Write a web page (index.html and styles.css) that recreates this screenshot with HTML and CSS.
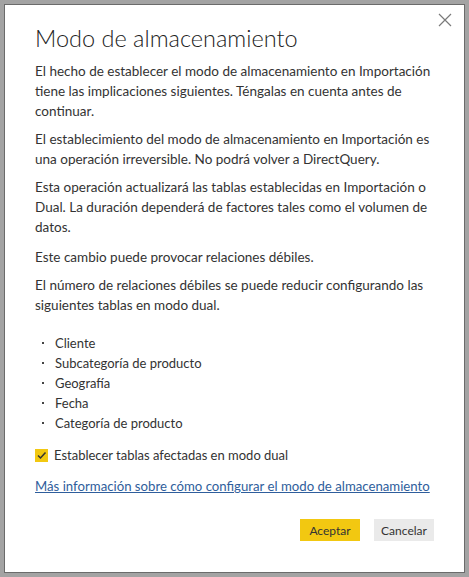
FILE: index.html
```html
<!DOCTYPE html>
<html lang="es">
<head>
<meta charset="utf-8">
<link rel="stylesheet" href="styles.css">
</head>
<body>
<div class="dialog">
  <button class="close" aria-label="Cerrar">
    <svg width="14" height="14" viewBox="0 0 14 14"><path d="M1 1L13 13M13 1L1 13" stroke="#7a7a7a" stroke-width="1.2" fill="none"/></svg>
  </button>
  <h1 class="title">Modo de almacenamiento</h1>
  <p class="para">El hecho de establecer el modo de almacenamiento en Importación tiene las implicaciones siguientes. Téngalas en cuenta antes de continuar.</p>
  <p class="para">El establecimiento del modo de almacenamiento en Importación es una operación irreversible. No podrá volver a DirectQuery.</p>
  <p class="para">Esta operación actualizará las tablas establecidas en Importación o Dual. La duración dependerá de factores tales como el volumen de datos.</p>
  <p class="para">Este cambio puede provocar relaciones débiles.</p>
  <p class="para">El número de relaciones débiles se puede reducir configurando las siguientes tablas en modo dual.</p>
  <ul class="tables">
    <li>Cliente</li>
    <li>Subcategoría de producto</li>
    <li>Geografía</li>
    <li>Fecha</li>
    <li>Categoría de producto</li>
  </ul>
  <label class="check">
    <span class="box"><svg width="13" height="13" viewBox="0 0 13 13"><path d="M3 6.5L5.5 9L10.5 3.5" stroke="#333" stroke-width="1.5" fill="none"/></svg></span>
    Establecer tablas afectadas en modo dual
  </label>
  <a class="more" href="#">Más información sobre cómo configurar el modo de almacenamiento</a>
  <div class="actions">
    <button class="btn primary">Aceptar</button>
    <button class="btn secondary">Cancelar</button>
  </div>
</div>
</body>
</html>
```
FILE: styles.css
```css
html, body {
  margin: 0;
  padding: 0;
  background: #a3a3a3;
}
body {
  padding: 4px;
  font-family: Lato, "Noto Sans", sans-serif;
  color: #333;
}
.dialog {
  box-sizing: border-box;
  width: 461px;
  height: 569px;
  background: #fff;
  border: 1px solid #6b6b6b;
  position: relative;
  padding: 17px 16px 0 30px;
}
.close {
  position: absolute;
  top: 5px;
  right: 9px;
  width: 20px;
  height: 20px;
  padding: 3px;
  border: 0;
  background: transparent;
}
.title {
  font-weight: 300;
  font-size: 23.5px;
  line-height: 32px;
  margin: 0 0 7px 0;
  color: #222;
}
.para {
  margin: 0 0 8px 0;
  font-size: 13.5px;
  line-height: 20px;
}
.para:nth-of-type(4) {
  margin-top: 10px;
}
.tables {
  list-style: none;
  margin: 18px 0 0 0;
  padding: 0;
  font-size: 13px;
  line-height: 20px;
}
.tables li {
  display: flex;
  align-items: center;
}
.tables li::before {
  content: "";
  width: 2px;
  height: 2px;
  background: #444;
  margin: 0 11px 0 7px;
}
.check {
  display: flex;
  align-items: center;
  gap: 6px;
  margin-top: 12px;
  font-size: 13px;
  line-height: 20px;
}
.box {
  width: 13px;
  height: 13px;
  background: #f2c811;
  display: flex;
}
.more {
  display: block;
  margin-top: 11px;
  font-size: 13.2px;
  line-height: 20px;
  color: #2f5e9c;
  text-decoration: underline;
}
.actions {
  display: flex;
  justify-content: flex-end;
  gap: 14px;
  margin-top: 23px;
  padding-right: 14px;
}
.btn {
  width: 60px;
  height: 22px;
  border: 0;
  font-family: inherit;
  font-size: 12px;
  color: #333;
  padding: 0;
}
.primary { background: #f2c811; }
.secondary { background: #eaeaea; }
```
